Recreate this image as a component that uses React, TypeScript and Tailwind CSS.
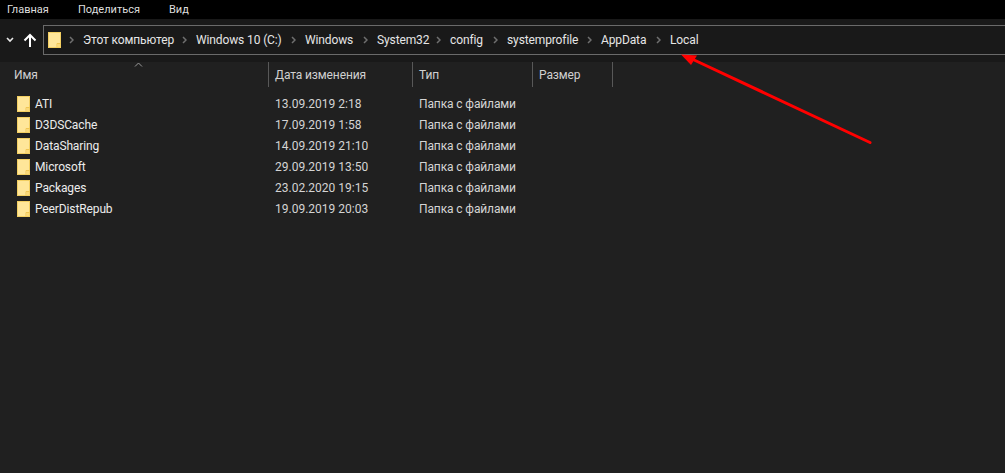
import React from "react";

const rows = [
  ["ATI", "13.09.2019 2:18"],
  ["D3DSCache", "17.09.2019 1:58"],
  ["DataSharing", "14.09.2019 21:10"],
  ["Microsoft", "29.09.2019 13:50"],
  ["Packages", "23.02.2020 19:15"],
  ["PeerDistRepub", "19.09.2019 20:03"],
];

const crumbs = [
  ["Этот компьютер", "w-[113px]"],
  ["Windows 10 (C:)", "w-[109px]"],
  ["Windows", "w-[72px]"],
  ["System32", "w-[73px]"],
  ["config", "w-[57px]"],
  ["systemprofile", "w-[94px]"],
  ["AppData", "w-[69px]"],
  ["Local", "w-[40px]"],
];

function Folder() {
  return (
    <svg width="13" height="16" viewBox="0 0 13 16" className="shrink-0">
      <rect x="0" y="0" width="13" height="16" fill="#f3cf62" />
      <rect x="1" y="1" width="11" height="14" fill="#ffe699" />
      <path d="M9 15.500V11.500H12.500" fill="none" stroke="#f0c654" />
      <rect x="10" y="12" width="2" height="3" fill="#fbd978" />
    </svg>
  );
}

function Chevron() {
  return (
    <svg width="5" height="8" viewBox="0 0 5 8" className="shrink-0">
      <path d="M1 1l3 3-3 3" fill="none" stroke="#6f6f6f" strokeWidth="1.5" />
    </svg>
  );
}

export default function App() {
  return (
    <div className="relative w-[1005px] h-[473px] overflow-hidden bg-[#202020] text-[12px] leading-4 text-[#e6e6e6] font-['Roboto','Open_Sans',sans-serif] tracking-[-0.12px]">
      <div className="h-[19px] bg-black flex items-center text-[#dedede] text-[11px] tracking-normal">
        <span className="w-[78px] pl-[7px]">Главная</span>
        <span className="w-[91px]">Поделиться</span>
        <span>Вид</span>
      </div>

      <div className="h-[43px] bg-[#191919] flex items-start pt-[6px]">
        <div className="w-[43px] h-[30px] shrink-0 flex items-center">
          <svg width="8" height="6" viewBox="0 0 8 6" className="ml-[6px]">
            <path d="M1 1l3 3 3-3" fill="none" stroke="#e8e8e8" strokeWidth="1.6" />
          </svg>
          <svg width="14" height="14" viewBox="0 0 14 14" className="ml-[9px]">
            <path d="M7 14V2M1.500 7.500L7 2l5.500 5.500" fill="none" stroke="#ffffff" strokeWidth="2" />
          </svg>
        </div>
        <div className="flex-1 h-[30px] border border-r-0 border-[#6a6a6a] flex items-center pl-[4px]">
          <Folder />
          <span className="w-[8px] shrink-0" />
          <Chevron />
          <div className="flex items-center ml-[9px]">
            {crumbs.map(([label, w], i) => (
              <div key={label} className={`${w} shrink-0 flex items-center justify-between pr-[9px]`}>
                <span className="whitespace-nowrap">{label}</span>
                {i < crumbs.length - 1 && <Chevron />}
              </div>
            ))}
          </div>
        </div>
      </div>

      <div className="relative h-[26px] flex text-[#d0d0d0]">
        <div className="w-[269px] pl-[14px] pt-[5px] border-r border-[#585858] h-[25px]">Имя</div>
        <div className="w-[144px] pl-[6px] pt-[5px] border-r border-[#585858] h-[25px]">Дата изменения</div>
        <div className="w-[120px] pl-[6px] pt-[5px] border-r border-[#585858] h-[25px]">Тип</div>
        <div className="w-[80px] pl-[6px] pt-[5px] border-r border-[#585858] h-[25px]">Размер</div>
        <svg width="9" height="5" viewBox="0 0 9 5" className="absolute left-[134px] top-0">
          <path d="M1 4.500l3.500-3.500 3.500 3.500" fill="none" stroke="#9a9a9a" />
        </svg>
      </div>

      <div className="pt-[5px] flex flex-col">
        {rows.map(([name, date]) => (
          <div key={name} className="h-[21px] flex items-center">
            <div className="w-[270px] flex items-center pl-[17px] gap-[5px] text-[#ececec]">
              <Folder />
              <span>{name}</span>
            </div>
            <div className="w-[144px] pl-[5px] text-[#d4d4d4] tracking-normal">{date}</div>
            <div className="pl-[5px] text-[#d4d4d4]">Папка с файлами</div>
          </div>
        ))}
      </div>

      <svg width="1005" height="473" className="absolute inset-0 pointer-events-none">
        <path d="M870 142.500L692 59" stroke="#ff0000" strokeWidth="3" strokeLinecap="round" />
        <path d="M681 54.500L697 55.500L691 65Z" fill="#ff0000" />
      </svg>
    </div>
  );
}
